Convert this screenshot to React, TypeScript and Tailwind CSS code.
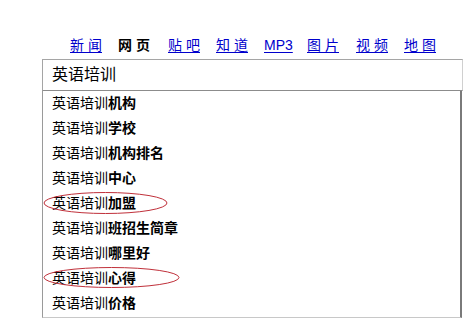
import React from 'react';

const navItems = [
    { label: ['新', '闻'], active: false, w: 'w-[48px]' },
    { label: ['网', '页'], active: true, w: 'w-[50px]' },
    { label: ['贴', '吧'], active: false, w: 'w-[48px]' },
    { label: ['知', '道'], active: false, w: 'w-[48px]' },
    { label: ['MP3'], active: false, w: 'w-[43px]' },
    { label: ['图', '片'], active: false, w: 'w-[49px]' },
    { label: ['视', '频'], active: false, w: 'w-[48px]' },
    { label: ['地', '图'], active: false, w: 'w-[48px]' },
];

const suggestions = ['机构', '学校', '机构排名', '中心', '加盟', '班招生简章', '哪里好', '心得', '价格'];

const App: React.FC = () => {
    return (
        <div className="relative w-[465px] h-[320px] bg-white overflow-hidden font-['SimSun','Liberation_Sans','Noto_Sans_CJK_SC',sans-serif] text-black">
            {/* top nav */}
            <div className="flex pl-[70px] pt-[37px] h-[59px] text-[14px] leading-[16px]">
                {navItems.map((item, i) => (
                    <div key={i} className={`${item.w} shrink-0`}>
                        {item.active ? (
                            <span className="font-bold">
                                <span className="tracking-[4px]">{item.label[0]}</span>
                                {item.label[1]}
                            </span>
                        ) : (
                            <a className="text-[#0000cc] underline underline-offset-2 cursor-pointer">
                                {item.label.length > 1 ? (
                                    <>
                                        <span className="tracking-[4px]">{item.label[0]}</span>
                                        {item.label[1]}
                                    </>
                                ) : (
                                    <span className="font-['Liberation_Sans',sans-serif] text-[14px]">{item.label[0]}</span>
                                )}
                            </a>
                        )}
                    </div>
                ))}
            </div>

            {/* search box */}
            <div className="ml-[42px] w-[421px]">
                <div className="h-[32px] border border-[#a5a5a5] border-r-[#d0d0d0] border-b-[#8c8c8c] flex items-center pl-[9px] text-[16px]">
                    英语培训
                </div>
                <div className="w-[420px] h-[227px] border-l border-l-[#9a9a9a] border-r-2 border-r-[#7a7a7a] border-b border-b-[#c8c8c8]">
                    {suggestions.map((s) => (
                        <div key={s} className="h-[25px] flex items-center pl-[9px] text-[14px]">
                            英语培训<span className="font-bold">{s}</span>
                        </div>
                    ))}
                </div>
            </div>

            {/* hand-drawn ellipses */}
            <svg className="absolute left-0 top-0 pointer-events-none" width="465" height="320">
                <ellipse cx="105.5" cy="203" rx="61.5" ry="10.5" fill="none" stroke="#c0303a" strokeWidth="1" />
                <ellipse cx="111.5" cy="277.5" rx="67.5" ry="10" fill="none" stroke="#c0303a" strokeWidth="1" />
            </svg>
        </div>
    );
};

export default App;
